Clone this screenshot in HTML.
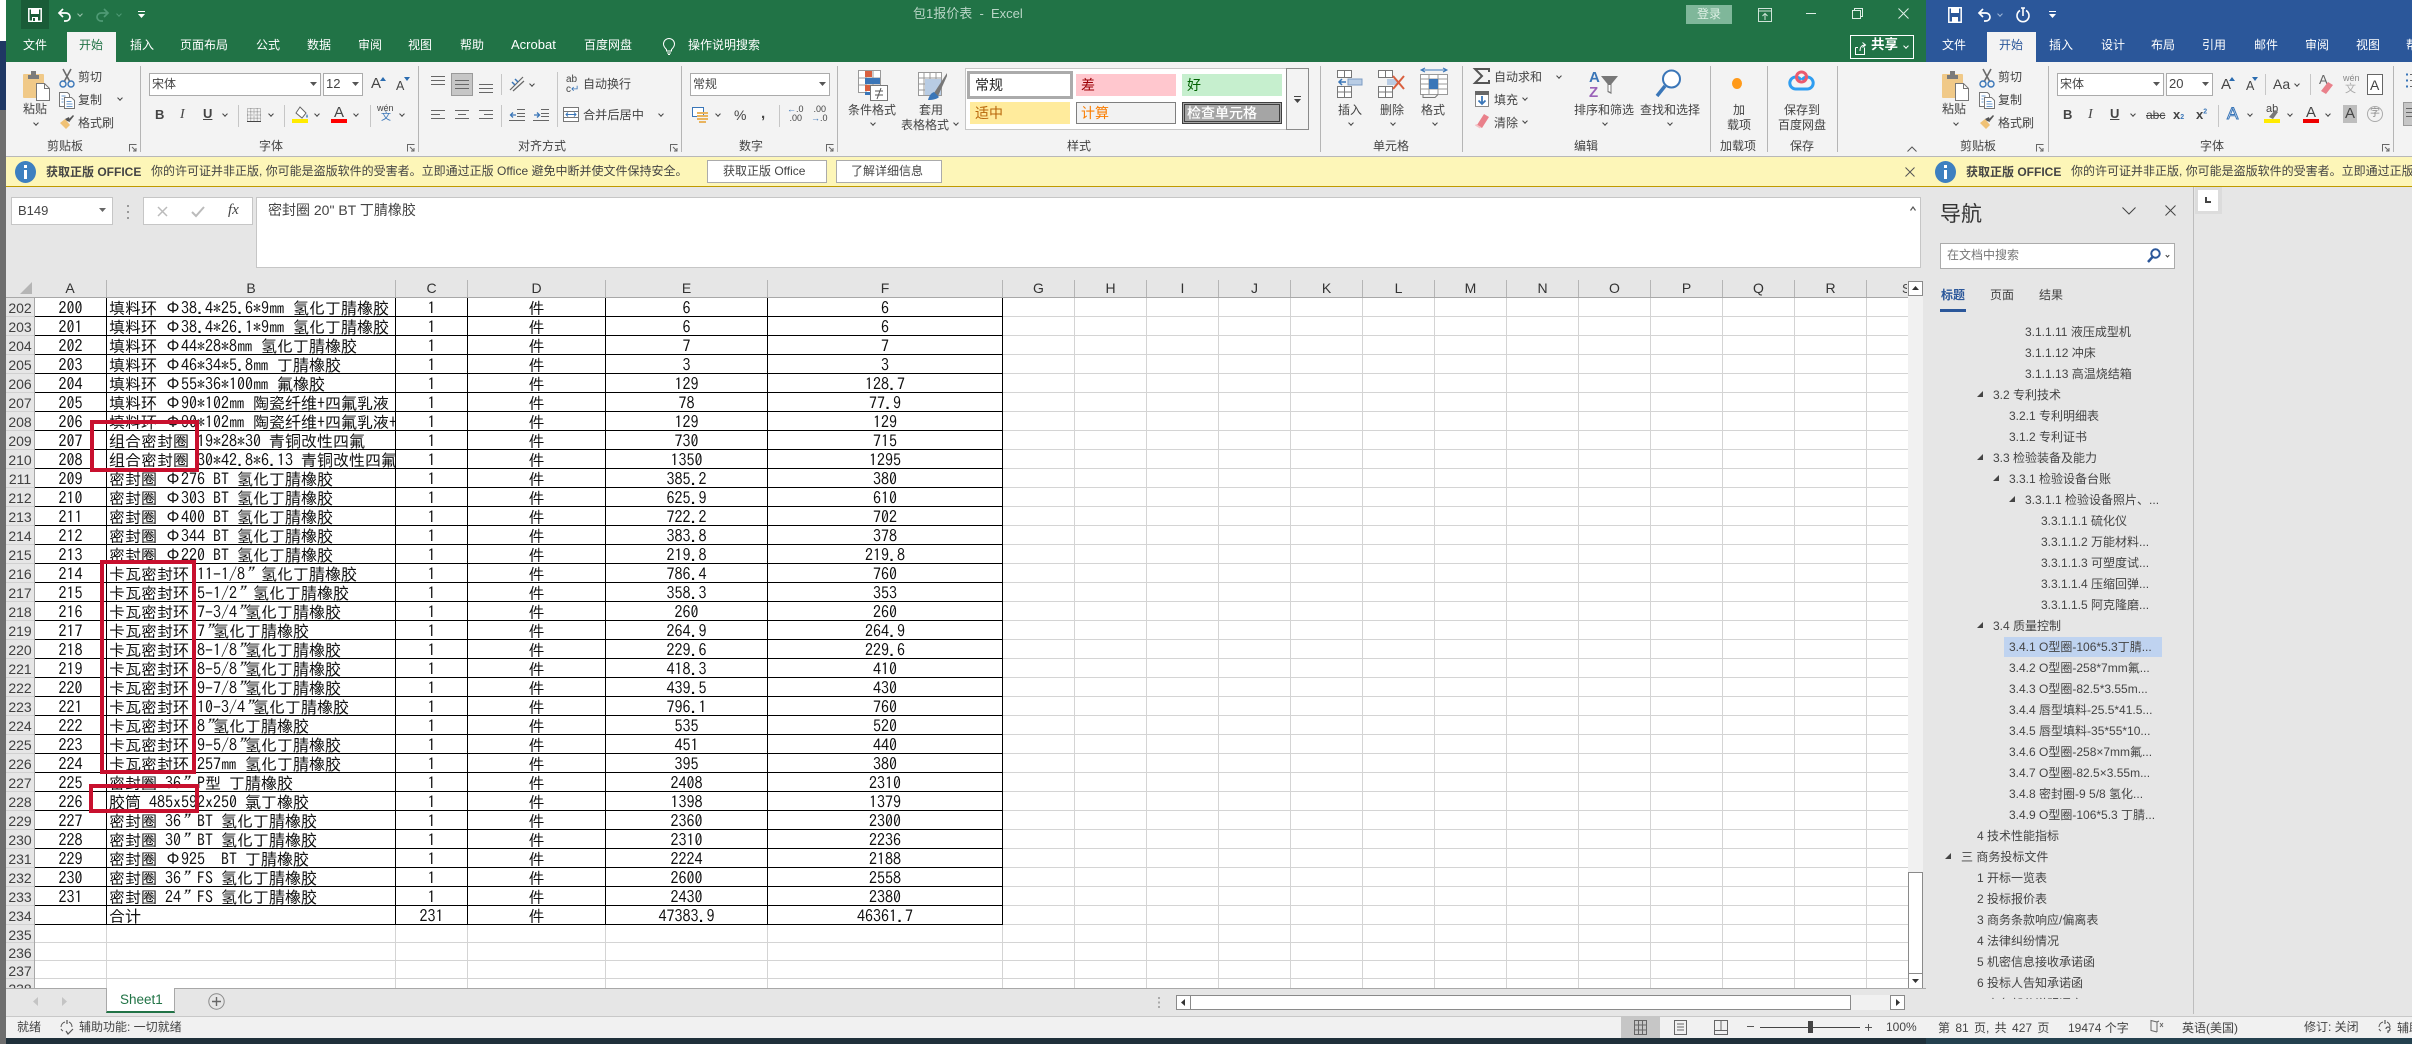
<!DOCTYPE html>
<html lang="zh"><head><meta charset="utf-8"><title>包1报价表 - Excel</title>
<style>
html,body{margin:0;padding:0;background:#e6e6e6}
#p{position:relative;width:2412px;height:1044px;overflow:hidden;background:#e6e6e6;font:12px/16px "Liberation Sans","Noto Sans CJK SC",sans-serif;color:#444}
#p *{box-sizing:border-box}
.a{position:absolute}
.t{position:absolute;white-space:pre;line-height:16px;font-size:12px;color:#444}
.w{color:#fff}
.i{position:absolute;overflow:visible}
.cv{position:absolute;width:4px;height:4px;border-right:1.2px solid #444;border-bottom:1.2px solid #444;transform:rotate(45deg)}
.sp{position:absolute;top:66px;height:86px;width:1px;background:#b5b5b5}
.ss{position:absolute;width:1px;background:#c6c6c6}
.r{display:flex;height:19px;border-bottom:1px solid #000;width:968px}
.r span{display:block;border-right:1px solid #000;overflow:hidden;white-space:pre;text-align:center;line-height:19px;padding-top:1px;font:16px/19px "IPAGothic","WenQuanYi Zen Hei","Noto Sans CJK SC",monospace;color:#111}
.r span:nth-child(1){width:72px}
.r span:nth-child(2){width:289px;text-align:left;padding-left:2px}
.r span:nth-child(3){width:72px}
.r span:nth-child(4){width:138px}
.r span:nth-child(5){width:162px}
.r span:nth-child(6){width:235px}
.r i{font-style:italic}
#rh div{height:19px;line-height:21px;text-align:center;font-size:14px;color:#404040;border-bottom:1px solid #d0d0d0}
#rh div.s{height:18px}
.ch{position:absolute;top:280px;height:17px;line-height:17px;text-align:center;font-size:14px;color:#333;border-right:1px solid #b5b5b5}
.n{position:absolute;white-space:pre;font-size:12px;line-height:16px;color:#444}
.l{position:absolute;background:#666}
.rb{position:absolute;border:4px solid #c8102e}
.g{position:absolute;white-space:pre;font-size:14px;line-height:22px;padding-left:5px}
</style></head><body><div id="p">

<svg width="0" height="0" style="position:absolute"><defs>
<symbol id="paste" viewBox="0 0 28 31"><rect x="0" y="4" width="21" height="24" rx="1" fill="#f0c988"/><path d="M5 5h11v4H5z M8 1h5v4H8z" fill="#7b7b7b"/><path d="M13.500 13.500h8l5 5v12h-13z" fill="#fff" stroke="#777"/><path d="M21.500 13.500v5h5" fill="none" stroke="#777"/></symbol>
<symbol id="cut" viewBox="0 0 16 20"><path d="M4 1l7 13M12 1L5 14" stroke="#6b6b6b" stroke-width="1.600" fill="none"/><circle cx="4" cy="16" r="3" fill="none" stroke="#3a76b8" stroke-width="1.400"/><circle cx="12" cy="16" r="3" fill="none" stroke="#3a76b8" stroke-width="1.400"/></symbol>
<symbol id="copy" viewBox="0 0 16 17"><path d="M.5.500h8l2 2v3H5.500v9h-5z" fill="#fff" stroke="#777"/><path d="M5.500 5.500h7l3 3v8h-10z" fill="#fff" stroke="#777"/><path d="M2.500 4h4M2.500 7h2M2.500 10h2M7.500 9.500h5M7.500 12h6M7.500 14.500h6" stroke="#3a76b8" stroke-width=".8"/></symbol>
<symbol id="brush" viewBox="0 0 16 16"><path d="M1 9l5-4 5 6-4 4z" fill="#f0c276"/><path d="M6 5l4-2 1 5-3-1z" fill="#555"/><path d="M10 5l4-4 1 1-4 5z" fill="#555"/></symbol>
<symbol id="tri" viewBox="0 0 6 6"><path d="M6 0v6H0z" fill="#444"/></symbol>
<symbol id="a3" viewBox="0 0 14 12"><path d="M0 1.500h14M0 5.500h14M0 9.500h14" stroke="#666"/></symbol>
<symbol id="grid" viewBox="0 0 14 14"><path d="M.5.500h13v13H.5zM.5 7h13M7 .5v13" fill="#fff" stroke="#777"/></symbol>
</defs></svg>

<!-- left desktop strip -->
<div class="a" style="left:0;top:0;width:6px;height:41px;background:#fff"></div>
<div class="a" style="left:0;top:41px;width:6px;height:69px;background:#1f3864"></div>
<div class="a" style="left:0;top:110px;width:6px;height:934px;background:#6e6e6e"></div>

<!-- title bars -->
<div class="a" style="left:6px;top:0;width:1920px;height:62px;background:#217346"></div>
<div class="a" style="left:1926px;top:0;width:486px;height:62px;background:#2b579a"></div>
<div class="a" style="left:21px;top:0;width:28px;height:29px;background:#1a5c38"></div>
<svg class="i" style="left:28px;top:8px" width="14" height="14" viewBox="0 0 14 14"><path d="M.8.800h12.400v12.400H.8z" fill="none" stroke="#fff" stroke-width="1.500"/><path d="M3 1h8v5H3zM4 9h6v4H4z" fill="#fff"/><rect x="5" y="10" width="2" height="3" fill="#1a5c38"/></svg>
<svg class="i" style="left:57px;top:8px" width="14" height="14" viewBox="0 0 14 14"><path d="M2 5h7a4 4 0 0 1 0 8H7" fill="none" stroke="#fff" stroke-width="1.700"/><path d="M6 1L2 5l4 4" fill="none" stroke="#fff" stroke-width="1.700"/></svg>
<div class="cv" style="left:78px;top:12px;border-color:#9cc4ae"></div>
<svg class="i" style="left:96px;top:8px" width="14" height="14" viewBox="0 0 14 14"><path d="M12 5H5a4 4 0 0 0 0 8h2" fill="none" stroke="#4f9a75" stroke-width="1.700"/><path d="M8 1l4 4-4 4" fill="none" stroke="#4f9a75" stroke-width="1.700"/></svg>
<div class="cv" style="left:117px;top:12px;border-color:#4f9a75"></div>
<svg class="i" style="left:138px;top:11px" width="7" height="8" viewBox="0 0 7 8"><path d="M0 .5h7" stroke="#fff"/><path d="M0 3h7L3.500 7z" fill="#fff"/></svg>

<div class="t" style="left:913px;top:6px;font-size:13px;color:#b9d5c6">包1报价表  -  Excel</div>
<div class="a" style="left:1686px;top:5px;width:46px;height:19px;background:#7fb79a"></div>
<div class="t" style="left:1697px;top:6px;color:#dff0e6">登录</div>
<svg class="i" style="left:1758px;top:8px" width="14" height="14" viewBox="0 0 14 14"><path d="M.5.500h13v13H.5zM.5 3h13M7 12V6M4.500 8L7 5.500 9.500 8" fill="none" stroke="#cfe3d8"/></svg>
<div class="a" style="left:1806px;top:13px;width:10px;height:1px;background:#dfeee6"></div>
<svg class="i" style="left:1852px;top:8px" width="11" height="11" viewBox="0 0 11 11"><path d="M.5 2.500h8v8h-8zM2.500 2.500v-2h8v8h-2" fill="none" stroke="#dfeee6"/></svg>
<svg class="i" style="left:1898px;top:8px" width="11" height="11" viewBox="0 0 11 11"><path d="M.5.500l10 10M10.500.500l-10 10" stroke="#dfeee6"/></svg>
<div class="a" style="left:1850px;top:35px;width:64px;height:24px;border:1px solid #fff"></div>
<svg class="i" style="left:1854px;top:41px" width="13" height="14" viewBox="0 0 13 14"><path d="M1.500 6.500v7h9v-7M4 6.500H1.500M6 10c0-4 2-6 5-6M8.500 1.500L11.500 4 8.500 6.500" fill="none" stroke="#fff"/></svg>
<div class="t w" style="left:1871px;top:37px;font-size:13.500px;font-weight:700">共享</div>
<div class="cv" style="left:1904px;top:44px;border-color:#fff"></div>

<!-- excel tabs -->
<div class="a" style="left:67px;top:32px;width:49px;height:30px;background:#f3f3f3"></div>
<div class="t w" style="left:23px;top:37px">文件</div>
<div class="t" style="left:79px;top:37px;color:#217346">开始</div>
<div class="t w" style="left:130px;top:37px">插入</div>
<div class="t w" style="left:180px;top:37px">页面布局</div>
<div class="t w" style="left:256px;top:37px">公式</div>
<div class="t w" style="left:307px;top:37px">数据</div>
<div class="t w" style="left:358px;top:37px">审阅</div>
<div class="t w" style="left:408px;top:37px">视图</div>
<div class="t w" style="left:460px;top:37px">帮助</div>
<div class="t w" style="left:511px;top:37px;font-size:13px">Acrobat</div>
<div class="t w" style="left:584px;top:37px">百度网盘</div>
<svg class="i" style="left:662px;top:38px" width="14" height="17" viewBox="0 0 14 17"><path d="M4.500 11.500C3 10 1.500 8.500 1.500 6a5.500 5.500 0 0 1 11 0c0 2.500-1.500 4-3 5.500v1.500h-5zM5 15h4M6 16.500h2" fill="none" stroke="#fff"/></svg>
<div class="t w" style="left:688px;top:37px">操作说明搜索</div>

<!-- word tabs -->
<div class="a" style="left:1987px;top:32px;width:49px;height:30px;background:#f3f3f3"></div>
<div class="t w" style="left:1942px;top:37px">文件</div>
<div class="t" style="left:1999px;top:37px;color:#2b579a">开始</div>
<div class="t w" style="left:2049px;top:37px">插入</div>
<div class="t w" style="left:2101px;top:37px">设计</div>
<div class="t w" style="left:2151px;top:37px">布局</div>
<div class="t w" style="left:2202px;top:37px">引用</div>
<div class="t w" style="left:2254px;top:37px">邮件</div>
<div class="t w" style="left:2305px;top:37px">审阅</div>
<div class="t w" style="left:2356px;top:37px">视图</div>
<div class="t w" style="left:2406px;top:37px">帮助</div>
<svg class="i" style="left:1948px;top:7px" width="14" height="16" viewBox="0 0 14 16"><path d="M.8.800h12.400v14.400H.8z" fill="none" stroke="#fff" stroke-width="1.500"/><path d="M3 1h8v5H3zM4 10h6v5H4z" fill="#fff"/></svg>
<svg class="i" style="left:1977px;top:8px" width="14" height="14" viewBox="0 0 14 14"><path d="M2 5h7a4 4 0 0 1 0 8H7" fill="none" stroke="#fff" stroke-width="1.700"/><path d="M6 1L2 5l4 4" fill="none" stroke="#fff" stroke-width="1.700"/></svg>
<div class="cv" style="left:1998px;top:12px;border-color:#9db6d8"></div>
<svg class="i" style="left:2016px;top:7px" width="14" height="16" viewBox="0 0 14 16"><path d="M4 3.500A6 6 0 1 0 10 3.500M7 1v8M5 1h4" fill="none" stroke="#fff" stroke-width="1.600"/></svg>
<svg class="i" style="left:2049px;top:11px" width="7" height="8" viewBox="0 0 7 8"><path d="M0 .5h7" stroke="#fff"/><path d="M0 3h7L3.500 7z" fill="#fff"/></svg>

<!-- ribbon -->
<div class="a" style="left:6px;top:62px;width:2406px;height:94px;background:#f3f3f3"></div>
<div class="a" style="left:6px;top:156px;width:2406px;height:1px;background:#b8b8b8"></div>
<div class="sp" style="left:140px"></div><div class="sp" style="left:418px"></div><div class="sp" style="left:681px"></div><div class="sp" style="left:837px"></div><div class="sp" style="left:1320px"></div><div class="sp" style="left:1462px"></div><div class="sp" style="left:1710px"></div><div class="sp" style="left:1767px"></div><div class="sp" style="left:1837px"></div><div class="sp" style="left:2048px"></div><div class="sp" style="left:2393px"></div>

<!-- clipboard excel -->
<svg class="i" style="left:23px;top:70px" width="28" height="31"><use href="#paste"/></svg>
<div class="t" style="left:23px;top:101px">粘贴</div><div class="cv" style="left:34px;top:121px"></div>
<svg class="i" style="left:59px;top:68px" width="16" height="20"><use href="#cut"/></svg><div class="t" style="left:78px;top:69px">剪切</div>
<svg class="i" style="left:59px;top:92px" width="16" height="17"><use href="#copy"/></svg><div class="t" style="left:78px;top:92px">复制</div><div class="cv" style="left:118px;top:96px"></div>
<svg class="i" style="left:59px;top:114px" width="16" height="16"><use href="#brush"/></svg><div class="t" style="left:78px;top:115px">格式刷</div>
<div class="t" style="left:47px;top:138px">剪贴板</div>

<!-- font excel -->
<div class="a" style="left:149px;top:73px;width:172px;height:23px;background:#fff;border:1px solid #ababab"></div>
<div class="t" style="left:152px;top:76px">宋体</div>
<svg class="i" style="left:310px;top:82px" width="7" height="4"><path d="M0 0h7L3.500 4z" fill="#555"/></svg>
<div class="a" style="left:323px;top:73px;width:40px;height:23px;background:#fff;border:1px solid #ababab"></div>
<div class="t" style="left:326px;top:76px;font-size:13px">12</div>
<svg class="i" style="left:352px;top:82px" width="7" height="4"><path d="M0 0h7L3.500 4z" fill="#555"/></svg>
<div class="t" style="left:371px;top:76px;font-size:15px">A</div><svg class="i" style="left:380px;top:77px" width="6" height="4"><path d="M0 4h6L3 0z" fill="#2b6cb0"/></svg>
<div class="t" style="left:396px;top:78px;font-size:12.500px">A</div><svg class="i" style="left:404px;top:77px" width="6" height="4"><path d="M0 0h6L3 4z" fill="#2b6cb0"/></svg>
<div class="t" style="left:155px;top:107px;font-weight:700;font-size:13px">B</div>
<div class="t" style="left:180px;top:107px;font-style:italic;font-family:'Liberation Serif',serif;font-size:14px">I</div>
<div class="t" style="left:203px;top:106px;font-size:13px;font-weight:700;text-decoration:underline">U</div><div class="cv" style="left:223px;top:112px"></div>
<div class="ss" style="left:238px;top:105px;height:22px"></div>
<svg class="i" style="left:247px;top:108px" width="14" height="14" viewBox="0 0 14 14"><path d="M.5.500h13v13H.5zM.5 7h13M7 .5v13M.5 3.700h13M.5 10.300h13M3.700.5v13M10.300.5v13" fill="none" stroke="#888" stroke-dasharray="1 1"/><path d="M0 13.500h14" stroke="#444"/></svg>
<div class="cv" style="left:269px;top:112px"></div>
<div class="ss" style="left:284px;top:105px;height:22px"></div>
<svg class="i" style="left:293px;top:106px" width="16" height="13" viewBox="0 0 16 13"><path d="M7 1l6 6-4 5-6-5z" fill="#fff" stroke="#666"/><path d="M14 8c1 2 1 3 0 4-1-1-1-2 0-4z" fill="#3a76b8"/></svg>
<div class="a" style="left:292px;top:119px;width:16px;height:4px;background:#ffeb00"></div><div class="cv" style="left:315px;top:112px"></div>
<div class="t" style="left:334px;top:105px;font-size:15px">A</div><div class="a" style="left:331px;top:119px;width:16px;height:4px;background:#f00"></div><div class="cv" style="left:354px;top:112px"></div>
<div class="ss" style="left:370px;top:105px;height:22px"></div>
<div class="t" style="left:377px;top:103px;font-size:9px;line-height:10px">wén</div><div class="t" style="left:381px;top:112px;font-size:10px;line-height:12px;color:#3a76b8">文</div><div class="cv" style="left:400px;top:112px"></div>
<div class="t" style="left:259px;top:138px">字体</div>
<svg class="i" style="left:129px;top:144px" width="8" height="8" viewBox="0 0 8 8"><path d="M.5 7.500v-7h7M3 3l4 4M7 4v3H4" fill="none" stroke="#666"/></svg>
<svg class="i" style="left:407px;top:144px" width="8" height="8" viewBox="0 0 8 8"><path d="M.5 7.500v-7h7M3 3l4 4M7 4v3H4" fill="none" stroke="#666"/></svg>
<svg class="i" style="left:670px;top:144px" width="8" height="8" viewBox="0 0 8 8"><path d="M.5 7.500v-7h7M3 3l4 4M7 4v3H4" fill="none" stroke="#666"/></svg>
<svg class="i" style="left:826px;top:144px" width="8" height="8" viewBox="0 0 8 8"><path d="M.5 7.500v-7h7M3 3l4 4M7 4v3H4" fill="none" stroke="#666"/></svg>

<!-- alignment -->
<svg class="i" style="left:431px;top:75px" width="14" height="12"><use href="#a3"/></svg>
<div class="a" style="left:451px;top:73px;width:22px;height:23px;background:#c6c6c6;border:1px solid #9a9a9a"></div>
<svg class="i" style="left:455px;top:79px" width="14" height="12"><use href="#a3"/></svg>
<svg class="i" style="left:479px;top:83px" width="14" height="12"><use href="#a3"/></svg>
<div class="ss" style="left:501px;top:74px;height:21px"></div>
<svg class="i" style="left:509px;top:76px" width="16" height="16" viewBox="0 0 16 16"><path d="M1 14L14 1M4 15L15 5" stroke="#666" stroke-width="1.200"/><path d="M3 6l3 3M6 3l3 3" stroke="#3a76b8" stroke-width="1.500"/></svg><div class="cv" style="left:530px;top:82px"></div>
<div class="ss" style="left:557px;top:72px;height:55px"></div>
<div class="t" style="left:566px;top:75px;font-size:10px;line-height:10px">ab</div><div class="t" style="left:566px;top:85px;font-size:10px;line-height:10px">c<span style="color:#3a76b8">↵</span></div>
<div class="t" style="left:583px;top:76px">自动换行</div>
<svg class="i" style="left:431px;top:109px" width="14" height="12" viewBox="0 0 14 12"><path d="M0 1.500h14M0 5.500h9M0 9.500h14" stroke="#666"/></svg>
<svg class="i" style="left:455px;top:109px" width="14" height="12" viewBox="0 0 14 12"><path d="M0 1.500h14M3 5.500h8M0 9.500h14" stroke="#666"/></svg>
<svg class="i" style="left:479px;top:109px" width="14" height="12" viewBox="0 0 14 12"><path d="M0 1.500h14M5 5.500h9M0 9.500h14" stroke="#666"/></svg>
<div class="ss" style="left:501px;top:105px;height:22px"></div>
<svg class="i" style="left:509px;top:108px" width="16" height="14" viewBox="0 0 16 14"><path d="M8 1.500h8M8 5.500h8M8 8.500h8M0 12.500h16" stroke="#666"/><path d="M7 7H2M4 4.500L1.500 7 4 9.500" fill="none" stroke="#3a76b8" stroke-width="1.300"/></svg>
<svg class="i" style="left:533px;top:108px" width="16" height="14" viewBox="0 0 16 14"><path d="M8 1.500h8M8 5.500h8M8 8.500h8M0 12.500h16" stroke="#666"/><path d="M1 7h5M4 4.500L6.500 7 4 9.500" fill="none" stroke="#3a76b8" stroke-width="1.300"/></svg>
<svg class="i" style="left:563px;top:107px" width="16" height="15" viewBox="0 0 16 15"><path d="M.5.500h15v14H.5zM.5 4.500h15M.5 10.500h15" fill="#fff" stroke="#777"/><path d="M3 7.500h10M5 5.500l-2 2 2 2M11 5.500l2 2-2 2" fill="none" stroke="#3a76b8"/></svg>
<div class="t" style="left:583px;top:107px;font-size:12.200px">合并后居中</div><div class="cv" style="left:659px;top:112px"></div>
<div class="t" style="left:518px;top:138px">对齐方式</div>

<!-- number -->
<div class="a" style="left:690px;top:73px;width:140px;height:23px;background:#fff;border:1px solid #ababab"></div>
<div class="t" style="left:693px;top:76px">常规</div>
<svg class="i" style="left:819px;top:82px" width="7" height="4"><path d="M0 0h7L3.500 4z" fill="#555"/></svg>
<svg class="i" style="left:692px;top:107px" width="17" height="17" viewBox="0 0 17 17"><path d="M.5.500h11v9H.5z" fill="#fff" stroke="#3a76b8"/><path d="M5 6h11M5 9h11M5 12h11M7 15h7" stroke="#e9b45f" stroke-width="2"/></svg>
<div class="cv" style="left:716px;top:112px"></div>
<div class="t" style="left:734px;top:107px;font-size:14px">%</div>
<div class="t" style="left:761px;top:106px;font-size:15px;font-weight:700">,</div>
<div class="ss" style="left:779px;top:105px;height:22px"></div>
<div class="t" style="left:787px;top:105px;font-size:9px;line-height:9px"><span style="color:#3a76b8">←</span>.0
 .00</div>
<div class="t" style="left:811px;top:105px;font-size:9px;line-height:9px"> .00
<span style="color:#3a76b8">→</span>.0</div>
<div class="t" style="left:739px;top:138px">数字</div>

<!-- styles -->
<svg class="i" style="left:858px;top:70px" width="30" height="31" viewBox="0 0 30 31"><path d="M.5.500h22v22H.5zM.5 8h22M.5 15h22M8 .5v22M15 .5v22" fill="#fff" stroke="#999"/><rect x="7" y="1" width="7" height="6" fill="#d9603f"/><rect x="7" y="8" width="15" height="6" fill="#3a76b8"/><rect x="7" y="15" width="11" height="6" fill="#d9603f"/><rect x="7" y="22" width="7" height="3" fill="#3a76b8"/><path d="M12.500 15.500h17v15h-17z" fill="#fff" stroke="#777"/><path d="M17 21h8M17 25h8M19 29l4-11" stroke="#555"/></svg>
<div class="t" style="left:848px;top:102px">条件格式</div><div class="cv" style="left:871px;top:121px"></div>
<svg class="i" style="left:918px;top:72px" width="30" height="29" viewBox="0 0 30 29"><path d="M.5.500h23v23H.5zM.5 6h23M.5 12h23M.5 18h23M6 .5v23M12 .5v23M18 .5v23" fill="#fff" stroke="#999"/><rect x="7" y="7" width="16" height="16" fill="#b8cce4"/><path d="M29 1L16 21l4 3L29 4z" fill="#777"/><path d="M16 20c-3 1-5 4-6 8 5 0 9-1 11-3z" fill="#3a76b8"/></svg>
<div class="t" style="left:919px;top:102px">套用</div><div class="t" style="left:901px;top:117px">表格格式</div><div class="cv" style="left:954px;top:121px"></div>
<div class="a" style="left:965px;top:68px;width:344px;height:62px;background:#fff;border:1px solid #c6c6c6"></div>
<div class="a" style="left:1286px;top:68px;width:23px;height:62px;background:#f3f3f3;border:1px solid #8a8a8a"></div>
<svg class="i" style="left:1294px;top:96px" width="7" height="7"><path d="M0 .5h7" stroke="#444"/><path d="M0 3h7L3.500 7z" fill="#444"/></svg>
<div class="a" style="left:967px;top:71px;width:106px;height:28px;background:#fff;border:3px solid #ababab"></div><div class="g" style="left:970px;top:74px;height:22px;color:#222">常规</div>
<div class="a g" style="left:1076px;top:74px;width:100px;height:22px;background:#ffc7ce;color:#9c0006">差</div>
<div class="a g" style="left:1182px;top:74px;width:100px;height:22px;background:#c6efce;color:#006100">好</div>
<div class="a g" style="left:970px;top:102px;width:100px;height:22px;background:#ffeb9c;color:#b8660a">适中</div>
<div class="a g" style="left:1076px;top:102px;width:100px;height:22px;background:#f2f2f2;border:1px solid #7f7f7f;color:#fa7d00;line-height:20px;padding-left:4px">计算</div>
<div class="a g" style="left:1182px;top:102px;width:100px;height:22px;background:#a5a5a5;border:3px double #3f3f3f;color:#fff;font-weight:500;line-height:16px;padding-left:2px">检查单元格</div>
<div class="t" style="left:1067px;top:138px">样式</div>

<!-- cells -->
<svg class="i" style="left:1337px;top:70px" width="26" height="28" viewBox="0 0 26 28"><path d="M.5.500h14v7H.5zM7.500.5v7M.5 16.500h14v11H.5zM7.500 16.500v11M.5 22h14" fill="#fff" stroke="#777"/><rect x="11" y="9" width="14" height="6" fill="#b8cce4" stroke="#7c9cc4"/><path d="M9 12H2M5 9l-3 3 3 3" fill="none" stroke="#3a76b8" stroke-width="1.500"/></svg>
<div class="t" style="left:1338px;top:102px">插入</div><div class="cv" style="left:1349px;top:121px"></div>
<svg class="i" style="left:1378px;top:70px" width="27" height="28" viewBox="0 0 27 28"><path d="M.5.500h14v7H.5zM7.500.5v7M.5 16.500h14v11H.5zM7.500 16.500v11M.5 22h14" fill="#fff" stroke="#777"/><rect x="9" y="9" width="10" height="6" fill="#b8cce4"/><path d="M15 6l11 13M26 6L15 19" stroke="#d9603f" stroke-width="2"/></svg>
<div class="t" style="left:1380px;top:102px">删除</div><div class="cv" style="left:1391px;top:121px"></div>
<svg class="i" style="left:1420px;top:67px" width="28" height="33" viewBox="0 0 28 33"><path d="M1 3h26M5 1L1 3l4 2M23 1l4 2-4 2" fill="none" stroke="#3a76b8"/><path d="M.5 7.500h27v20H.5zM.5 12h27M.5 17h27M.5 22h27M9 7.500v20M18 7.500v20" fill="#fff" stroke="#999"/><rect x="9" y="12" width="9" height="10" fill="#3a76b8"/><path d="M3 27.500v3h12l3-3" fill="none" stroke="#777"/></svg>
<div class="t" style="left:1421px;top:102px">格式</div><div class="cv" style="left:1433px;top:121px"></div>
<div class="t" style="left:1373px;top:138px">单元格</div>

<!-- editing -->
<svg class="i" style="left:1474px;top:68px" width="16" height="16" viewBox="0 0 16 16"><path d="M15 4V1H1l7 7-7 7h14v-3" fill="none" stroke="#555" stroke-width="2"/></svg>
<div class="t" style="left:1494px;top:69px">自动求和</div><div class="cv" style="left:1557px;top:74px"></div>
<svg class="i" style="left:1475px;top:91px" width="14" height="16" viewBox="0 0 14 16"><path d="M.5.500h13v15H.5z" fill="#fff" stroke="#888"/><rect x="0" y="0" width="14" height="4" fill="#666"/><path d="M7 5v8M3.500 9.500L7 13l3.500-3.500" fill="none" stroke="#3a76b8" stroke-width="1.800"/></svg>
<div class="t" style="left:1494px;top:92px">填充</div><div class="cv" style="left:1523px;top:96px"></div>
<svg class="i" style="left:1475px;top:113px" width="14" height="16" viewBox="0 0 14 16"><path d="M9 1l5 3-7 11-5-3z" fill="#e9808a"/><path d="M1 11l5 3-1 1.500-5-3z" fill="#f3c2c6"/></svg>
<div class="t" style="left:1494px;top:115px">清除</div><div class="cv" style="left:1523px;top:119px"></div>
<div class="t" style="left:1589px;top:70px;font-size:15px;font-weight:700;color:#3a76b8;line-height:16px">A</div>
<div class="t" style="left:1589px;top:86px;font-size:15px;font-weight:700;color:#9a62b8;line-height:14px">Z</div>
<svg class="i" style="left:1601px;top:76px" width="17" height="19" viewBox="0 0 17 19"><path d="M0 0h17L10.500 8v10l-4-2V8z" fill="#777"/><path d="M7.500 9v6l2 1V9z" fill="#fff"/></svg>
<div class="t" style="left:1574px;top:102px">排序和筛选</div><div class="cv" style="left:1603px;top:121px"></div>
<svg class="i" style="left:1655px;top:69px" width="27" height="29" viewBox="0 0 27 29"><circle cx="16.500" cy="10" r="8.500" fill="#fff" stroke="#3a76b8" stroke-width="2"/><path d="M10 17L2 27" stroke="#3a76b8" stroke-width="3.500"/></svg>
<div class="t" style="left:1640px;top:102px">查找和选择</div><div class="cv" style="left:1668px;top:121px"></div>
<div class="t" style="left:1574px;top:138px">编辑</div>

<!-- add-in / save -->
<div class="a" style="left:1732px;top:78px;width:10px;height:11px;border-radius:50%;background:#ff9a1a"></div>
<div class="t" style="left:1733px;top:102px">加</div><div class="t" style="left:1727px;top:117px">载项</div>
<div class="t" style="left:1720px;top:138px">加载项</div>
<svg class="i" style="left:1788px;top:70px" width="27" height="26" viewBox="0 0 27 26"><path d="M8 19a6 6 0 1 1 5-9M19 19a6 6 0 1 0-5-9" fill="none" stroke="#2f9df0" stroke-width="3"/><path d="M8 19h11" stroke="#2f9df0" stroke-width="3"/><circle cx="13.500" cy="7" r="5" fill="none" stroke="#ea5a6e" stroke-width="3"/></svg>
<div class="t" style="left:1784px;top:102px">保存到</div><div class="t" style="left:1778px;top:117px">百度网盘</div>
<div class="t" style="left:1790px;top:138px">保存</div>
<svg class="i" style="left:1907px;top:146px" width="10" height="6" viewBox="0 0 10 6"><path d="M.5 5.500L5 1l4.500 4.500" fill="none" stroke="#555"/></svg>

<!-- word ribbon -->
<svg class="i" style="left:1942px;top:70px" width="28" height="31"><use href="#paste"/></svg>
<div class="t" style="left:1942px;top:101px">粘贴</div><div class="cv" style="left:1954px;top:121px"></div>
<svg class="i" style="left:1979px;top:68px" width="16" height="20"><use href="#cut"/></svg><div class="t" style="left:1998px;top:69px">剪切</div>
<svg class="i" style="left:1979px;top:92px" width="16" height="17"><use href="#copy"/></svg><div class="t" style="left:1998px;top:92px">复制</div>
<svg class="i" style="left:1979px;top:114px" width="16" height="16"><use href="#brush"/></svg><div class="t" style="left:1998px;top:115px">格式刷</div>
<div class="t" style="left:1960px;top:138px">剪贴板</div>
<svg class="i" style="left:2036px;top:144px" width="8" height="8" viewBox="0 0 8 8"><path d="M.5 7.500v-7h7M3 3l4 4M7 4v3H4" fill="none" stroke="#666"/></svg>
<div class="a" style="left:2057px;top:73px;width:107px;height:23px;background:#fff;border:1px solid #ababab"></div><div class="t" style="left:2060px;top:76px">宋体</div>
<svg class="i" style="left:2153px;top:82px" width="7" height="4"><path d="M0 0h7L3.500 4z" fill="#555"/></svg>
<div class="a" style="left:2166px;top:73px;width:47px;height:23px;background:#fff;border:1px solid #ababab"></div><div class="t" style="left:2169px;top:76px;font-size:13px">20</div>
<svg class="i" style="left:2202px;top:82px" width="7" height="4"><path d="M0 0h7L3.500 4z" fill="#555"/></svg>
<div class="t" style="left:2221px;top:77px;font-size:15px">A</div><svg class="i" style="left:2229px;top:77px" width="6" height="4"><path d="M0 4h6L3 0z" fill="#2b6cb0"/></svg>
<div class="t" style="left:2246px;top:78px;font-size:12.500px">A</div><svg class="i" style="left:2252px;top:77px" width="6" height="4"><path d="M0 0h6L3 4z" fill="#2b6cb0"/></svg>
<div class="ss" style="left:2265px;top:74px;height:21px"></div>
<div class="t" style="left:2273px;top:76px;font-size:14px">Aa</div><div class="cv" style="left:2295px;top:82px"></div>
<div class="ss" style="left:2310px;top:74px;height:21px"></div>
<svg class="i" style="left:2319px;top:73px" width="14" height="22" viewBox="0 0 14 22"><text x="0" y="11" font-size="13" fill="#666" font-family="Liberation Sans">A</text><path d="M9 9l5 3-7 9-5-3z" fill="#e9808a"/></svg>
<div class="t" style="left:2343px;top:73px;font-size:9px;line-height:10px;color:#888">wén</div><div class="t" style="left:2345px;top:83px;font-size:11px;line-height:12px;color:#aaa">文</div>
<div class="a" style="left:2367px;top:74px;width:16px;height:21px;border:1px solid #666;background:#fff"></div><div class="t" style="left:2370px;top:77px;font-size:14px">A</div>
<div class="t" style="left:2063px;top:107px;font-weight:700;font-size:13px">B</div>
<div class="t" style="left:2088px;top:107px;font-style:italic;font-family:'Liberation Serif',serif;font-size:14px">I</div>
<div class="t" style="left:2110px;top:106px;font-size:13px;font-weight:700;text-decoration:underline">U</div><div class="cv" style="left:2131px;top:112px"></div>
<div class="t" style="left:2146px;top:107px;font-size:12px;text-decoration:line-through">abc</div>
<div class="t" style="left:2173px;top:107px;font-size:13px;font-weight:700">x<span style="font-size:7px;color:#3a76b8">2</span></div>
<div class="t" style="left:2196px;top:107px;font-size:13px;font-weight:700">x<sup style="font-size:7px;line-height:0;color:#3a76b8">2</sup></div>
<div class="ss" style="left:2218px;top:105px;height:22px"></div>
<div class="t" style="left:2227px;top:106px;font-size:17px;color:#fff;-webkit-text-stroke:1px #3a76b8">A</div><div class="cv" style="left:2248px;top:112px"></div>
<div class="t" style="left:2266px;top:103px;font-size:11px;line-height:12px">ab</div><svg class="i" style="left:2266px;top:110px" width="12" height="9" viewBox="0 0 12 9"><path d="M9 0l3 2-5 7-4-2z" fill="#777"/></svg>
<div class="a" style="left:2264px;top:119px;width:16px;height:4px;background:#ffeb00"></div><div class="cv" style="left:2288px;top:112px"></div>
<div class="t" style="left:2306px;top:105px;font-size:15px">A</div><div class="a" style="left:2303px;top:119px;width:16px;height:4px;background:#e00"></div><div class="cv" style="left:2326px;top:112px"></div>
<div class="a" style="left:2343px;top:105px;width:14px;height:18px;background:#bdbdbd"></div><div class="t" style="left:2345px;top:106px;font-size:15px">A</div>
<div class="a" style="left:2367px;top:106px;width:16px;height:16px;border:1px solid #aaa;border-radius:50%"></div><div class="t" style="left:2370px;top:106px;font-size:10px;color:#888">字</div>
<div class="t" style="left:2200px;top:138px">字体</div>
<svg class="i" style="left:2382px;top:144px" width="8" height="8" viewBox="0 0 8 8"><path d="M.5 7.500v-7h7M3 3l4 4M7 4v3H4" fill="none" stroke="#666"/></svg>
<svg class="i" style="left:2405px;top:73px" width="7" height="16" viewBox="0 0 7 16"><path d="M1 1.500h2M1 7.500h2M1 13.500h2" stroke="#3a76b8" stroke-width="2"/><path d="M5 1.500h2M5 7.500h2M5 13.500h2" stroke="#666"/></svg>
<div class="a" style="left:2403px;top:102px;width:9px;height:24px;background:#c6c6c6;border:1px solid #9a9a9a;border-right:0"></div>
<svg class="i" style="left:2406px;top:107px" width="6" height="12"><path d="M0 1.500h6M0 5.500h6M0 9.500h6" stroke="#666"/></svg>

<!-- yellow bar -->
<div class="a" style="left:6px;top:157px;width:2406px;height:30px;background:#fdf6b8;border-bottom:1.500px solid #bf9a00"></div>
<svg class="i" style="left:15px;top:161px" width="21" height="22" viewBox="0 0 21 22"><ellipse cx="10.500" cy="11" rx="10.500" ry="11" fill="#3d80c0"/><rect x="9" y="9" width="3" height="9" fill="#fff"/><rect x="9" y="4" width="3" height="3" fill="#fff"/></svg>
<div class="t" style="left:46px;top:164px;font-weight:700;color:#444">获取正版 OFFICE</div>
<div class="t" style="left:151px;top:163px;color:#444">你的许可证并非正版, 你可能是盗版软件的受害者。立即通过正版 Office 避免中断并使文件保持安全。</div>
<div class="a" style="left:707px;top:160px;width:120px;height:23px;background:#fff;border:1px solid #ababab"></div><div class="t" style="left:723px;top:163px">获取正版 Office</div>
<div class="a" style="left:836px;top:160px;width:106px;height:23px;background:#fff;border:1px solid #ababab"></div><div class="t" style="left:851px;top:163px">了解详细信息</div>
<svg class="i" style="left:1905px;top:167px" width="10" height="10" viewBox="0 0 10 10"><path d="M.5.500l9 9M9.500.500l-9 9" stroke="#555"/></svg>
<svg class="i" style="left:1935px;top:161px" width="21" height="22" viewBox="0 0 21 22"><ellipse cx="10.500" cy="11" rx="10.500" ry="11" fill="#3d80c0"/><rect x="9" y="9" width="3" height="9" fill="#fff"/><rect x="9" y="4" width="3" height="3" fill="#fff"/></svg>
<div class="t" style="left:1966px;top:164px;font-weight:700">获取正版 OFFICE</div>
<div class="t" style="left:2071px;top:163px">你的许可证并非正版, 你可能是盗版软件的受害者。立即通过正版 Office 避免中断并使文件保持安全。</div>

<!-- formula bar -->
<div class="a" style="left:11px;top:197px;width:102px;height:28px;background:#fff;border:1px solid #c6c6c6"></div>
<div class="t" style="left:18px;top:203px;font-size:13px">B149</div>
<svg class="i" style="left:99px;top:208px" width="7" height="4"><path d="M0 0h7L3.500 4z" fill="#666"/></svg>
<svg class="i" style="left:127px;top:205px" width="2" height="14"><path d="M1 0v2M1 6v2M1 12v2" stroke="#999" stroke-width="2"/></svg>
<div class="a" style="left:143px;top:197px;width:110px;height:28px;background:#fff;border:1px solid #c6c6c6"></div>
<svg class="i" style="left:157px;top:206px" width="11" height="11" viewBox="0 0 11 11"><path d="M1 1l9 9M10 1l-9 9" stroke="#bbb" stroke-width="1.500"/></svg>
<svg class="i" style="left:191px;top:206px" width="14" height="11" viewBox="0 0 14 11"><path d="M1 6l4 4 8-9" fill="none" stroke="#bbb" stroke-width="2"/></svg>
<div class="t" style="left:228px;top:202px;font-family:'Liberation Serif',serif;font-style:italic;font-size:15px">fx</div>
<div class="a" style="left:256px;top:197px;width:1665px;height:71px;background:#fff;border:1px solid #c6c6c6"></div>
<div class="t" style="left:268px;top:202px;font-size:14px">密封圈 20" BT 丁腈橡胶</div>
<svg class="i" style="left:1910px;top:206px" width="6" height="5" viewBox="0 0 6 5"><path d="M.5 4.500L3 1l2.500 3.500" fill="none" stroke="#555" stroke-width="1.200"/></svg>

<!-- sheet area -->
<div class="a" style="left:35px;top:298px;width:1873px;height:690px;background:#fff"></div>
<div class="a" style="left:1003px;top:298px;width:905px;height:627px;background:repeating-linear-gradient(to bottom,transparent 0,transparent 18px,#d4d4d4 18px,#d4d4d4 19px)"></div>
<div class="a" style="left:35px;top:925px;width:1873px;height:63px;background:repeating-linear-gradient(to bottom,transparent 0,transparent 17px,#d4d4d4 17px,#d4d4d4 18px)"></div>
<div class="a" style="left:1003px;top:298px;width:905px;height:690px;background:repeating-linear-gradient(to right,transparent 0,transparent 71px,#d4d4d4 71px,#d4d4d4 72px)"></div>
<div class="a" style="left:106px;top:925px;width:1px;height:63px;background:#d4d4d4"></div>
<div class="a" style="left:395px;top:925px;width:1px;height:63px;background:#d4d4d4"></div>
<div class="a" style="left:467px;top:925px;width:1px;height:63px;background:#d4d4d4"></div>
<div class="a" style="left:605px;top:925px;width:1px;height:63px;background:#d4d4d4"></div>
<div class="a" style="left:767px;top:925px;width:1px;height:63px;background:#d4d4d4"></div>
<div class="a" style="left:1002px;top:925px;width:1px;height:63px;background:#d4d4d4"></div>

<!-- col headers -->
<svg class="i" style="left:20px;top:282px" width="12" height="12"><path d="M12 0v12H0z" fill="#b5b5b5"/></svg>
<div class="a" style="left:6px;top:297px;width:1902px;height:1px;background:#a8a8a8"></div>
<div class="ch" style="left:34px;width:73px">A</div><div class="ch" style="left:107px;width:289px">B</div><div class="ch" style="left:396px;width:72px">C</div><div class="ch" style="left:468px;width:138px">D</div><div class="ch" style="left:606px;width:162px">E</div><div class="ch" style="left:768px;width:235px">F</div><div class="ch" style="left:1003px;width:72px">G</div><div class="ch" style="left:1075px;width:72px">H</div><div class="ch" style="left:1147px;width:72px">I</div><div class="ch" style="left:1219px;width:72px">J</div><div class="ch" style="left:1291px;width:72px">K</div><div class="ch" style="left:1363px;width:72px">L</div><div class="ch" style="left:1435px;width:72px">M</div><div class="ch" style="left:1507px;width:72px">N</div><div class="ch" style="left:1579px;width:72px">O</div><div class="ch" style="left:1651px;width:72px">P</div><div class="ch" style="left:1723px;width:72px">Q</div><div class="ch" style="left:1795px;width:72px">R</div>
<div class="t" style="left:1902px;top:280px;font-size:13px;line-height:17px;width:5px;overflow:hidden">S</div>

<!-- row headers -->
<div id="rh" class="a" style="left:6px;top:298px;width:29px;height:690px;overflow:hidden;border-right:1px solid #a8a8a8;background:#e6e6e6">
<div>202</div><div>203</div><div>204</div><div>205</div><div>206</div><div>207</div><div>208</div><div>209</div><div>210</div><div>211</div><div>212</div><div>213</div><div>214</div><div>215</div><div>216</div><div>217</div><div>218</div><div>219</div><div>220</div><div>221</div><div>222</div><div>223</div><div>224</div><div>225</div><div>226</div><div>227</div><div>228</div><div>229</div><div>230</div><div>231</div><div>232</div><div>233</div><div>234</div><div class="s">235</div><div class="s">236</div><div class="s">237</div><div class="s">238</div>
</div>

<!-- rows -->
<div class="a" style="left:35px;top:298px;width:968px">
<div class="r"><span>200</span><span>填料环 Φ38.4*25.6*9㎜ 氢化丁腈橡胶</span><span>1</span><span>件</span><span>6</span><span>6</span></div>
<div class="r"><span>201</span><span>填料环 Φ38.4*26.1*9㎜ 氢化丁腈橡胶</span><span>1</span><span>件</span><span>6</span><span>6</span></div>
<div class="r"><span>202</span><span>填料环 Φ44*28*8㎜ 氢化丁腈橡胶</span><span>1</span><span>件</span><span>7</span><span>7</span></div>
<div class="r"><span>203</span><span>填料环 Φ46*34*5.8㎜ 丁腈橡胶</span><span>1</span><span>件</span><span>3</span><span>3</span></div>
<div class="r"><span>204</span><span>填料环 Φ55*36*100㎜ 氟橡胶</span><span>1</span><span>件</span><span>129</span><span>128.7</span></div>
<div class="r"><span>205</span><span>填料环 Φ90*102㎜ 陶瓷纤维+四氟乳液</span><span>1</span><span>件</span><span>78</span><span>77.9</span></div>
<div class="r"><span>206</span><span>填料环 Φ90*102㎜ 陶瓷纤维+四氟乳液+</span><span>1</span><span>件</span><span>129</span><span>129</span></div>
<div class="r"><span>207</span><span>组合密封圈 19*28*30 青铜改性四氟</span><span>1</span><span>件</span><span>730</span><span>715</span></div>
<div class="r"><span>208</span><span>组合密封圈 30*42.8*6.13 青铜改性四氟</span><span>1</span><span>件</span><span>1350</span><span>1295</span></div>
<div class="r"><span>209</span><span>密封圈 Φ276 BT 氢化丁腈橡胶</span><span>1</span><span>件</span><span>385.2</span><span>380</span></div>
<div class="r"><span>210</span><span>密封圈 Φ303 BT 氢化丁腈橡胶</span><span>1</span><span>件</span><span>625.9</span><span>610</span></div>
<div class="r"><span>211</span><span>密封圈 Φ400 BT 氢化丁腈橡胶</span><span>1</span><span>件</span><span>722.2</span><span>702</span></div>
<div class="r"><span>212</span><span>密封圈 Φ344 BT 氢化丁腈橡胶</span><span>1</span><span>件</span><span>383.8</span><span>378</span></div>
<div class="r"><span>213</span><span>密封圈 Φ220 BT 氢化丁腈橡胶</span><span>1</span><span>件</span><span>219.8</span><span>219.8</span></div>
<div class="r"><span>214</span><span>卡瓦密封环 11-1/8<i>"</i> 氢化丁腈橡胶</span><span>1</span><span>件</span><span>786.4</span><span>760</span></div>
<div class="r"><span>215</span><span>卡瓦密封环 5-1/2<i>"</i> 氢化丁腈橡胶</span><span>1</span><span>件</span><span>358.3</span><span>353</span></div>
<div class="r"><span>216</span><span>卡瓦密封环 7-3/4<i>"</i>氢化丁腈橡胶</span><span>1</span><span>件</span><span>260</span><span>260</span></div>
<div class="r"><span>217</span><span>卡瓦密封环 7<i>"</i>氢化丁腈橡胶</span><span>1</span><span>件</span><span>264.9</span><span>264.9</span></div>
<div class="r"><span>218</span><span>卡瓦密封环 8-1/8<i>"</i>氢化丁腈橡胶</span><span>1</span><span>件</span><span>229.6</span><span>229.6</span></div>
<div class="r"><span>219</span><span>卡瓦密封环 8-5/8<i>"</i>氢化丁腈橡胶</span><span>1</span><span>件</span><span>418.3</span><span>410</span></div>
<div class="r"><span>220</span><span>卡瓦密封环 9-7/8<i>"</i>氢化丁腈橡胶</span><span>1</span><span>件</span><span>439.5</span><span>430</span></div>
<div class="r"><span>221</span><span>卡瓦密封环 10-3/4<i>"</i>氢化丁腈橡胶</span><span>1</span><span>件</span><span>796.1</span><span>760</span></div>
<div class="r"><span>222</span><span>卡瓦密封环 8<i>"</i>氢化丁腈橡胶</span><span>1</span><span>件</span><span>535</span><span>520</span></div>
<div class="r"><span>223</span><span>卡瓦密封环 9-5/8<i>"</i>氢化丁腈橡胶</span><span>1</span><span>件</span><span>451</span><span>440</span></div>
<div class="r"><span>224</span><span>卡瓦密封环 257㎜ 氢化丁腈橡胶</span><span>1</span><span>件</span><span>395</span><span>380</span></div>
<div class="r"><span>225</span><span>密封圈 36<i>"</i> P型 丁腈橡胶</span><span>1</span><span>件</span><span>2408</span><span>2310</span></div>
<div class="r"><span>226</span><span>胶筒 485x592x250 氯丁橡胶</span><span>1</span><span>件</span><span>1398</span><span>1379</span></div>
<div class="r"><span>227</span><span>密封圈 36<i>"</i> BT 氢化丁腈橡胶</span><span>1</span><span>件</span><span>2360</span><span>2300</span></div>
<div class="r"><span>228</span><span>密封圈 30<i>"</i> BT 氢化丁腈橡胶</span><span>1</span><span>件</span><span>2310</span><span>2236</span></div>
<div class="r"><span>229</span><span>密封圈 Φ925  BT 丁腈橡胶</span><span>1</span><span>件</span><span>2224</span><span>2188</span></div>
<div class="r"><span>230</span><span>密封圈 36<i>"</i> FS 氢化丁腈橡胶</span><span>1</span><span>件</span><span>2600</span><span>2558</span></div>
<div class="r"><span>231</span><span>密封圈 24<i>"</i> FS 氢化丁腈橡胶</span><span>1</span><span>件</span><span>2430</span><span>2380</span></div>
<div class="r"><span></span><span>合计</span><span>231</span><span>件</span><span>47383.9</span><span>46361.7</span></div>
</div>

<!-- red boxes -->
<div class="rb" style="left:90px;top:420px;width:109px;height:52px"></div>
<div class="rb" style="left:100px;top:560px;width:96px;height:214px"></div>
<div class="rb" style="left:89px;top:784px;width:110px;height:29px"></div>

<!-- vertical scrollbar -->
<div class="a" style="left:1908px;top:281px;width:15px;height:707px;background:#f1f1f1"></div>
<div class="a" style="left:1908px;top:281px;width:15px;height:15px;background:#fff;border:1px solid #8a8a8a"></div>
<svg class="i" style="left:1912px;top:286px" width="7" height="4"><path d="M0 4h7L3.500 0z" fill="#333"/></svg>
<div class="a" style="left:1908px;top:872px;width:15px;height:102px;background:#fff;border:1px solid #8a8a8a"></div>
<div class="a" style="left:1908px;top:973px;width:15px;height:16px;background:#fff;border:1px solid #8a8a8a"></div>
<svg class="i" style="left:1912px;top:979px" width="7" height="4"><path d="M0 0h7L3.500 4z" fill="#333"/></svg>

<!-- tab bar -->
<div class="a" style="left:6px;top:988px;width:1920px;height:28px;background:#e6e6e6;border-top:1px solid #a8a8a8"></div>
<svg class="i" style="left:33px;top:997px" width="5" height="9"><path d="M5 0v9L0 4.500z" fill="#c4c4c4"/></svg>
<svg class="i" style="left:62px;top:997px" width="5" height="9"><path d="M0 0v9l5-4.500z" fill="#c4c4c4"/></svg>
<div class="a" style="left:106px;top:988px;width:69px;height:25px;background:#fff;border-left:1px solid #a8a8a8;border-right:1px solid #a8a8a8;border-bottom:2px solid #217346"></div>
<div class="t" style="left:120px;top:992px;font-size:13.500px;color:#217346">Sheet1</div>
<svg class="i" style="left:208px;top:993px" width="17" height="17" viewBox="0 0 17 17"><circle cx="8.500" cy="8.500" r="7.700" fill="none" stroke="#8a8a8a"/><path d="M8.500 4v9M4 8.500h9" stroke="#666" stroke-width="1.400"/></svg>
<svg class="i" style="left:1158px;top:997px" width="2" height="11"><path d="M1 0v2M1 4.500v2M1 9v2" stroke="#aaa" stroke-width="2"/></svg>
<div class="a" style="left:1176px;top:995px;width:15px;height:15px;background:#fff;border:1px solid #8a8a8a"></div>
<svg class="i" style="left:1181px;top:999px" width="4" height="7"><path d="M4 0v7L0 3.500z" fill="#333"/></svg>
<div class="a" style="left:1190px;top:995px;width:701px;height:15px;background:#f1f1f1"></div>
<div class="a" style="left:1190px;top:995px;width:661px;height:15px;background:#fff;border:1px solid #8a8a8a"></div>
<div class="a" style="left:1890px;top:995px;width:15px;height:15px;background:#fff;border:1px solid #8a8a8a"></div>
<svg class="i" style="left:1896px;top:999px" width="4" height="7"><path d="M0 0v7l4-3.500z" fill="#333"/></svg>

<!-- status bars -->
<div class="a" style="left:6px;top:1016px;width:2406px;height:22px;background:#f1f1f1;border-top:1px solid #c8c8c8"></div>
<div class="t" style="left:17px;top:1019px">就绪</div>
<svg class="i" style="left:60px;top:1020px" width="14" height="15" viewBox="0 0 14 15"><path d="M5 2A5.500 5.500 0 0 0 1 7M1 9c.5 1 1 1.500 2 2M9 2c2 1 3 3 3 5" fill="none" stroke="#555"/><path d="M7 0v4M6 11l2 3 5-5" fill="none" stroke="#555" stroke-width="1.200"/></svg>
<div class="t" style="left:79px;top:1019px">辅助功能: 一切就绪</div>
<div class="a" style="left:1621px;top:1016px;width:39px;height:22px;background:#c6c6c6"></div>
<svg class="i" style="left:1634px;top:1020px" width="13" height="15" viewBox="0 0 13 15"><path d="M.5.500h12v14H.5zM.5 5h12M.5 10h12M4.500.5v14M8.500.5v14" fill="none" stroke="#666"/></svg>
<svg class="i" style="left:1674px;top:1020px" width="13" height="15" viewBox="0 0 13 15"><path d="M.5.500h12v14H.5zM3 4h7M3 7h7M3 10h7" fill="none" stroke="#666"/></svg>
<svg class="i" style="left:1714px;top:1020px" width="14" height="15" viewBox="0 0 14 15"><path d="M.5.500h13v14H.5zM.5 10.500h13M7 .5v10" fill="none" stroke="#666"/></svg>
<div class="a" style="left:1747px;top:1026px;width:7px;height:1px;background:#555"></div>
<div class="a" style="left:1760px;top:1027px;width:100px;height:1px;background:#444"></div>
<div class="a" style="left:1808px;top:1021px;width:5px;height:12px;background:#444"></div>
<div class="a" style="left:1865px;top:1027px;width:7px;height:1px;background:#555"></div><div class="a" style="left:1868px;top:1024px;width:1px;height:7px;background:#555"></div>
<div class="t" style="left:1886px;top:1019px">100%</div>
<div class="t" style="left:1938px;top:1020px;word-spacing:2px">第 81 页, 共 427 页</div>
<div class="t" style="left:2068px;top:1020px">19474 个字</div>
<svg class="i" style="left:2150px;top:1020px" width="14" height="13" viewBox="0 0 14 13"><path d="M7 2L1 .5v10L7 12M7 2l2-1M7 2v10M10 3l3 4M13 3l-3 4" fill="none" stroke="#666"/></svg>
<div class="t" style="left:2182px;top:1020px">英语(美国)</div>
<div class="t" style="left:2304px;top:1019px">修订: 关闭</div>
<svg class="i" style="left:2378px;top:1020px" width="14" height="15" viewBox="0 0 14 15"><path d="M5 2A5.500 5.500 0 0 0 1 7M1 9c.5 1 1 1.500 2 2M9 2c2 1 3 3 3 5" fill="none" stroke="#555"/><path d="M7 0v4M8 9a2 2 0 1 1 2 2v2" fill="none" stroke="#555" stroke-width="1.200"/></svg>
<div class="t" style="left:2397px;top:1020px">辅助功能</div>

<div class="a" style="left:6px;top:1038px;width:1920px;height:6px;background:#1f303a"></div>
<div class="a" style="left:1926px;top:1038px;width:486px;height:6px;background:#24414f"></div>

<!-- word nav pane -->
<div class="a" style="left:1926px;top:187px;width:267px;height:829px;background:#e6e6e6"></div>
<div class="a" style="left:2193px;top:187px;width:1px;height:827px;background:#bdbdbd"></div>
<div class="a" style="left:2195px;top:187px;width:27px;height:27px;background:#dcdcdc"></div>
<div class="a" style="left:2198px;top:190px;width:20px;height:21px;background:#fff"></div>
<svg class="i" style="left:2205px;top:197px" width="6" height="6"><path d="M1 0v5h5" fill="none" stroke="#444" stroke-width="2"/></svg>
<div class="t" style="left:1940px;top:203px;font-size:21px;line-height:24px;color:#333">导航</div>
<svg class="i" style="left:2122px;top:207px" width="14" height="8" viewBox="0 0 14 8"><path d="M.5.500L7 7l6.500-6.500" fill="none" stroke="#444"/></svg>
<svg class="i" style="left:2165px;top:205px" width="11" height="11" viewBox="0 0 11 11"><path d="M.5.500l10 10M10.500.500l-10 10" stroke="#444"/></svg>
<div class="a" style="left:1940px;top:243px;width:235px;height:26px;background:#fff;border:1px solid #ababab"></div>
<div class="t" style="left:1947px;top:247px;color:#777">在文档中搜索</div>
<svg class="i" style="left:2147px;top:248px" width="14" height="15" viewBox="0 0 14 15"><circle cx="8.500" cy="5.500" r="4.200" fill="none" stroke="#2b579a" stroke-width="2"/><path d="M5.500 9L1 14" stroke="#2b579a" stroke-width="2.500"/></svg>
<div class="cv" style="left:2166px;top:254px;width:3px;height:3px"></div>
<div class="t" style="left:1941px;top:287px;color:#2b579a;font-weight:700">标题</div>
<div class="a" style="left:1940px;top:309px;width:26px;height:3px;background:#2b579a"></div>
<div class="t" style="left:1990px;top:287px">页面</div>
<div class="t" style="left:2039px;top:287px">结果</div>

<div class="a" style="left:2004px;top:637px;width:158px;height:20px;background:#bfd3f0"></div>
<div class="a" style="left:1926px;top:320px;width:267px;height:679px;overflow:hidden">
<div class="n" style="left:99px;top:4px">3.1.1.11 液压成型机</div>
<div class="n" style="left:99px;top:25px">3.1.1.12 冲床</div>
<div class="n" style="left:99px;top:46px">3.1.1.13 高温烧结箱</div>
<div class="n" style="left:67px;top:67px">3.2 专利技术</div><svg class="i" style="left:51px;top:71px" width="6" height="6"><use href="#tri"/></svg>
<div class="n" style="left:83px;top:88px">3.2.1 专利明细表</div>
<div class="n" style="left:83px;top:109px">3.1.2 专利证书</div>
<div class="n" style="left:67px;top:130px">3.3 检验装备及能力</div><svg class="i" style="left:51px;top:134px" width="6" height="6"><use href="#tri"/></svg>
<div class="n" style="left:83px;top:151px">3.3.1 检验设备台账</div><svg class="i" style="left:67px;top:155px" width="6" height="6"><use href="#tri"/></svg>
<div class="n" style="left:99px;top:172px">3.3.1.1 检验设备照片、...</div><svg class="i" style="left:83px;top:176px" width="6" height="6"><use href="#tri"/></svg>
<div class="n" style="left:115px;top:193px">3.3.1.1.1 硫化仪</div>
<div class="n" style="left:115px;top:214px">3.3.1.1.2 万能材料...</div>
<div class="n" style="left:115px;top:235px">3.3.1.1.3 可塑度试...</div>
<div class="n" style="left:115px;top:256px">3.3.1.1.4 压缩回弹...</div>
<div class="n" style="left:115px;top:277px">3.3.1.1.5 阿克隆磨...</div>
<div class="n" style="left:67px;top:298px">3.4 质量控制</div><svg class="i" style="left:51px;top:302px" width="6" height="6"><use href="#tri"/></svg>
<div class="n" style="left:83px;top:319px">3.4.1 O型圈-106*5.3丁腈...</div>
<div class="n" style="left:83px;top:340px">3.4.2 O型圈-258*7mm氟...</div>
<div class="n" style="left:83px;top:361px">3.4.3 O型圈-82.5*3.55m...</div>
<div class="n" style="left:83px;top:382px">3.4.4 唇型填料-25.5*41.5...</div>
<div class="n" style="left:83px;top:403px">3.4.5 唇型填料-35*55*10...</div>
<div class="n" style="left:83px;top:424px">3.4.6 O型圈-258×7mm氟...</div>
<div class="n" style="left:83px;top:445px">3.4.7 O型圈-82.5×3.55m...</div>
<div class="n" style="left:83px;top:466px">3.4.8 密封圈-9 5/8 氢化...</div>
<div class="n" style="left:83px;top:487px">3.4.9 O型圈-106*5.3 丁腈...</div>
<div class="n" style="left:51px;top:508px">4 技术性能指标</div>
<div class="n" style="left:35px;top:529px">三 商务投标文件</div><svg class="i" style="left:19px;top:533px" width="6" height="6"><use href="#tri"/></svg>
<div class="n" style="left:51px;top:550px">1 开标一览表</div>
<div class="n" style="left:51px;top:571px">2 投标报价表</div>
<div class="n" style="left:51px;top:592px">3 商务条款响应/偏离表</div>
<div class="n" style="left:51px;top:613px">4 法律纠纷情况</div>
<div class="n" style="left:51px;top:634px">5 机密信息接收承诺函</div>
<div class="n" style="left:51px;top:655px">6 投标人告知承诺函</div>
<div class="n" style="left:51px;top:676px">7 商务部分说明语言</div>
</div>

</div></body></html>
